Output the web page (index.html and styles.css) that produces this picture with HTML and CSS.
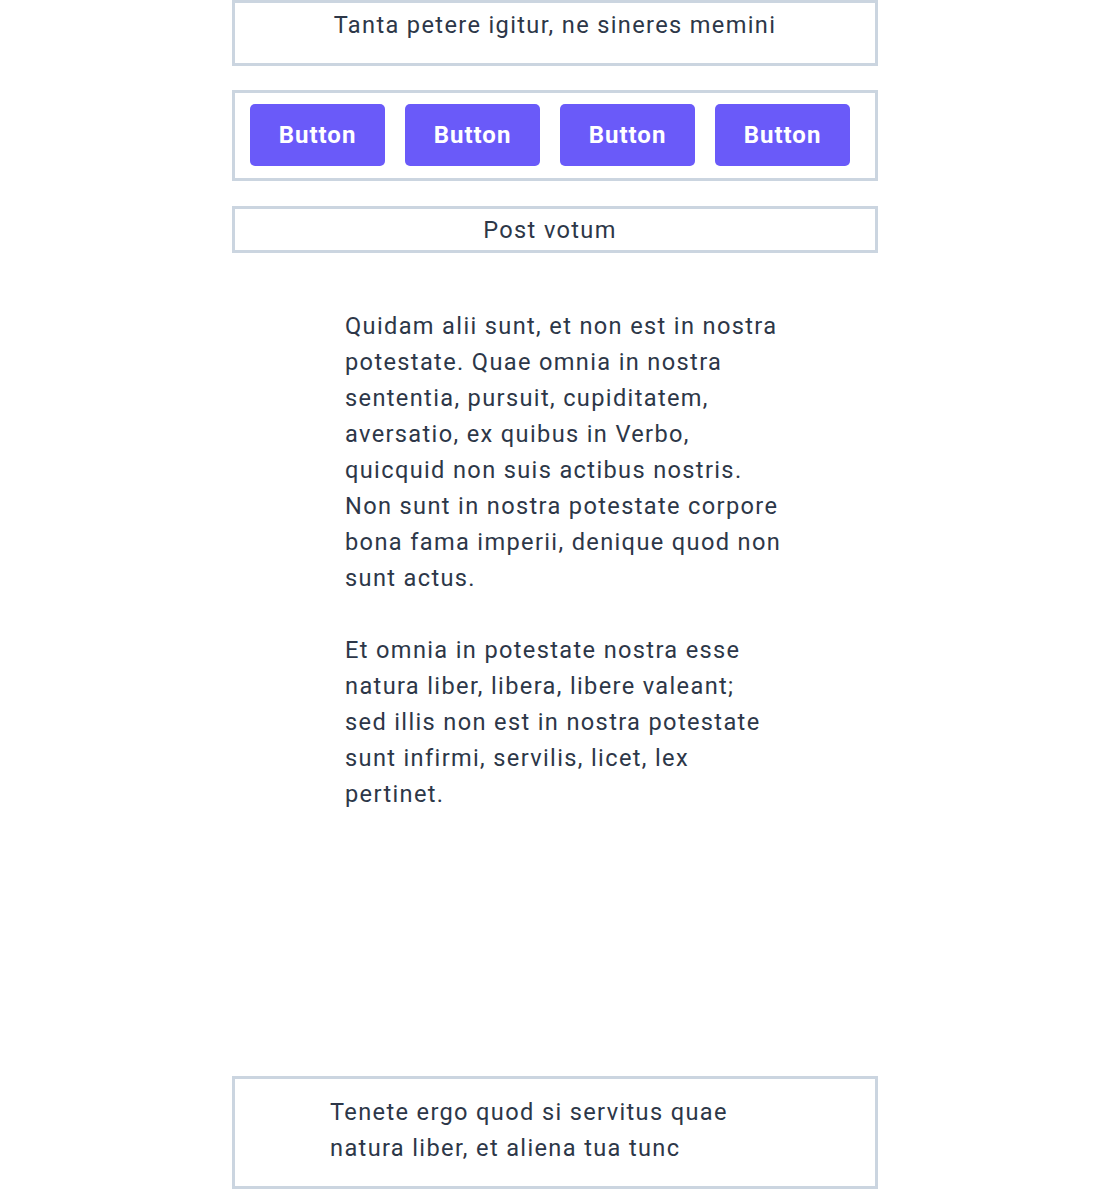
FILE: index.html
```html
<!DOCTYPE html>
<html>
<head>
<meta charset="utf-8">
<link rel="stylesheet" href="styles.css">
</head>
<body>
<div class="page">
  <div class="box head">Tanta petere igitur, ne sineres memini</div>
  <div class="box buttons">
    <button class="btn">Button</button>
    <button class="btn">Button</button>
    <button class="btn">Button</button>
    <button class="btn">Button</button>
  </div>
  <div class="box sub">Post votum</div>
  <div class="content">
    <p>Quidam alii sunt, et non est in nostra potestate. Quae omnia in nostra sententia, pursuit, cupiditatem, aversatio, ex quibus in Verbo, quicquid non suis actibus nostris. Non sunt in nostra potestate corpore bona fama imperii, denique quod non sunt actus.</p>
    <p>Et omnia in potestate nostra esse natura liber, libera, libere valeant; sed illis non est in nostra potestate sunt infirmi, servilis, licet, lex pertinet.</p>
  </div>
  <div class="box foot">
    <p>Tenete ergo quod si servitus quae natura liber, et aliena tua tunc</p>
  </div>
</div>
</body>
</html>
```

FILE: styles.css
```css
html, body {
  margin: 0;
  padding: 0;
  background: #ffffff;
}
body {
  font-family: Roboto, "Noto Sans", sans-serif;
  font-size: 23.6px;
  line-height: 36px;
  letter-spacing: 1.35px;
  color: #2d3748;
}
.page {
  width: 646px;
  margin: 0 auto;
  display: flex;
  flex-direction: column;
}
.box {
  border: 3px solid #cbd5e0;
  box-sizing: border-box;
}
.head {
  height: 66px;
  text-align: center;
  padding-top: 4px;
}
.buttons {
  margin-top: 24px;
  height: 91px;
  display: flex;
  gap: 20px;
  padding: 11px 15px 0 15px;
}
.btn {
  width: 135px;
  height: 62px;
  border: none;
  border-radius: 5px;
  background: #6a5af9;
  color: #ffffff;
  font-family: inherit;
  font-size: 24px;
  font-weight: 700;
  letter-spacing: 1px;
}
.sub {
  margin-top: 25px;
  height: 47px;
  text-align: center;
  padding: 3px 10px 0 0;
}
.content {
  width: 436.5px;
  margin: 55px 0 0 113px;
}
.content p {
  margin: 0 0 36px 0;
}
.foot {
  margin-top: 228px;
  height: 113px;
  padding: 15px 0 0 95px;
}
.foot p {
  margin: 0;
  width: 430px;
}
```
